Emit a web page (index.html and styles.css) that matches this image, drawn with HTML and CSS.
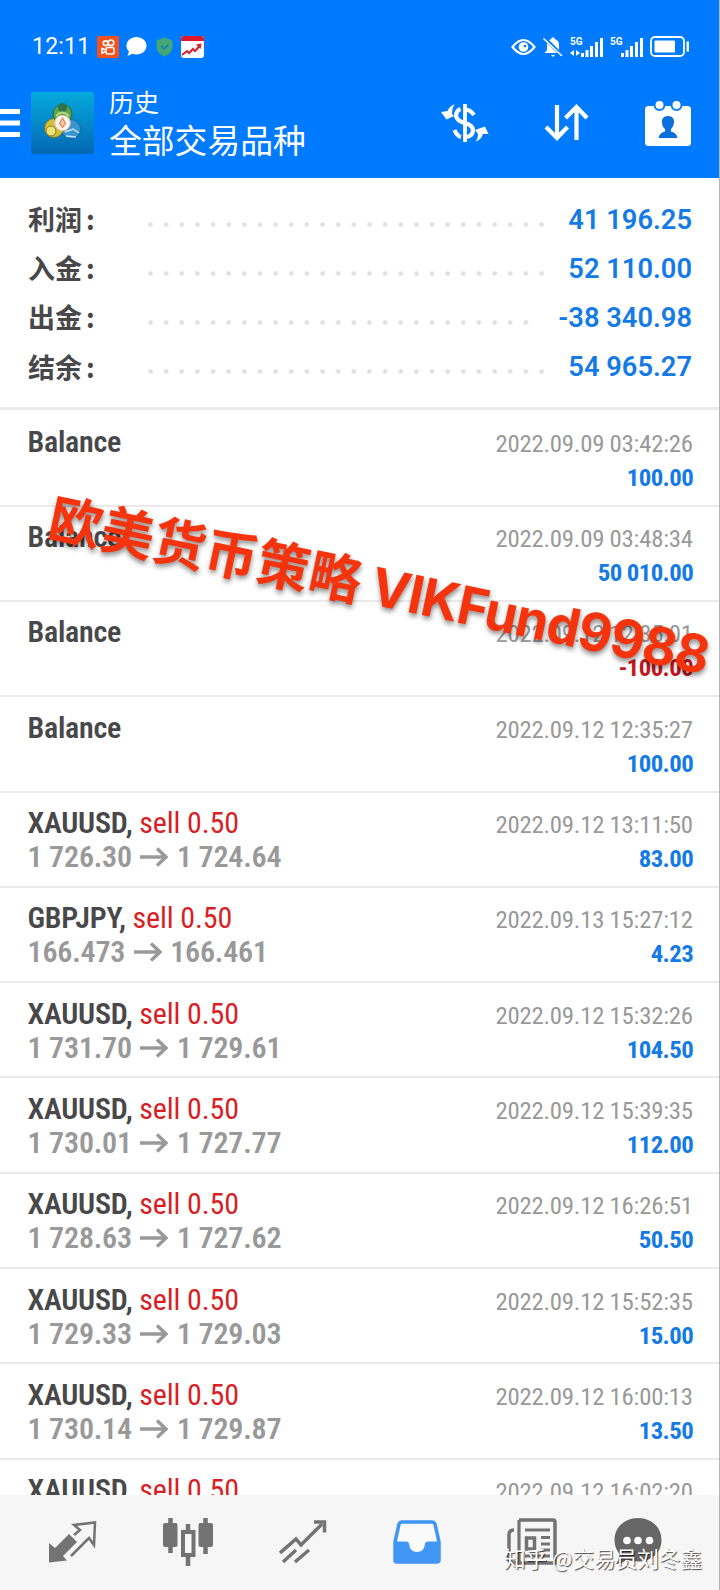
FILE: index.html
```html
<!DOCTYPE html>
<html lang="zh-CN">
<head>
    <meta charset="UTF-8">
    <meta name="viewport" content="width=device-width, initial-scale=1.0">
    <title>历史</title>
    <link rel="stylesheet" href="styles.css">
</head>
<body>

<div class="app">
    <header class="header">
        <div class="status-bar">
            <span class="clock">12:11</span>
            <svg class="st-video" width="22" height="22" viewBox="0 0 22 22">
                <rect width="22" height="22" rx="2" fill="#f4511e"/>
                <g fill="none" stroke="#fff" stroke-width="1.6">
                    <circle cx="8.6" cy="7.2" r="2.3"/>
                    <circle cx="14" cy="6.8" r="2.8"/>
                    <rect x="9" y="11.5" width="8" height="6.5" rx="1.6"/>
                    <path d="M9 14L5 12.5V17L9 15.5"/>
                </g>
            </svg>
            <svg class="st-chat" width="21" height="21" viewBox="0 0 21 21">
                <path d="M10.5 1C16 1 20.500 4.800 20.500 9.800S16 18.500 10.500 18.500C9 18.500 7.800 18.300 6.500 17.800L1.500 20L3 15.500C1.300 14 .5 12 .5 9.800C.5 4.800 5 1 10.500 1Z" fill="#fff"/>
            </svg>
            <svg class="st-shield" width="17" height="20" viewBox="0 0 17 20">
                <path d="M8.500 .5L16.500 3.500V9C16.500 14 13.500 17.500 8.500 19.500C3.500 17.500 .5 14 .5 9V3.500Z" fill="#43a876"/>
                <path d="M5 9L8 12L12.500 7.500" fill="none" stroke="#1478c8" stroke-width="1.500"/>
            </svg>
            <svg class="st-stock" width="23" height="22" viewBox="0 0 23 22">
                <rect width="23" height="22" rx="3" fill="#fff"/>
                <path d="M3 0H20Q23 0 23 3V5H0V3Q0 0 3 0Z" fill="#e0182d"/>
                <path d="M1 19L6 15L8 17L12 13L14 15L19 9.500" fill="none" stroke="#d8202c" stroke-width="2"/>
                <path d="M15 8.500L20.500 7.500L19.500 13Z" fill="#d8202c"/>
            </svg>
            <div class="status-right">
                <svg class="st-eye" width="25" height="18" viewBox="0 0 25 18">
                    <path d="M1.500 9Q12.500-5 23.500 9Q12.500 23 1.500 9Z" fill="none" stroke="#fff" stroke-width="2.200"/>
                    <circle cx="12.500" cy="9" r="4.800" fill="#fff"/>
                    <circle cx="14" cy="8" r="1.300" fill="#007aff"/>
                </svg>
                <svg class="st-bell" width="20" height="22" viewBox="0 0 20 22">
                    <path d="M1.500 17L4 14V9Q4 4 8.500 3V1.500H11.500V3Q16 4 16 9V14L18.500 17Z" fill="#fff"/>
                    <path d="M8 19H12L10 21Z" fill="#fff"/>
                    <path d="M1 1.500L19.500 20" stroke="#007aff" stroke-width="3.500"/>
                    <path d="M.5 2.500L19 20" stroke="#fff" stroke-width="1.500"/>
                </svg>
                <svg class="st-signal" width="33" height="22" viewBox="0 0 33 22">
                    <text x="0" y="9" class="net">5G</text>
                    <path d="M4 14L0 17L4 20ZM6 14L10 17L6 20Z" fill="#fff"/>
                    <path d="M12.500 17V21M17 14V21M21.500 10V21M26.500 6V21M31.500 2V21" stroke="#fff" stroke-width="3"/>
                </svg>
                <svg class="st-signal" width="33" height="22" viewBox="0 0 33 22">
                    <text x="0" y="9" class="net">5G</text>
                    <path d="M12.500 17V21M17 14V21M21.500 10V21M26.500 6V21M31.500 2V21" stroke="#fff" stroke-width="3"/>
                </svg>
                <svg class="st-battery" width="40" height="21" viewBox="0 0 40 21">
                    <rect x="1" y="1" width="33" height="19" rx="4" fill="none" stroke="#fff" stroke-width="1.800"/>
                    <rect x="4.500" y="4.500" width="20.500" height="12" rx="1" fill="#fff"/>
                    <rect x="36.500" y="5.500" width="2.500" height="10" fill="#fff"/>
                </svg>
            </div>
        </div>

        <div class="toolbar">
            <svg class="menu" width="20" height="30" viewBox="0 0 20 30">
                <path d="M0 3.500H20M0 15H20M0 26.500H20" stroke="#fff" stroke-width="5"/>
            </svg>
            <svg class="logo" width="63" height="62" viewBox="0 0 63 62">
                <defs>
                    <linearGradient id="logo-bg" x1="0" y1="0" x2="0" y2="1">
                        <stop offset="0" stop-color="#05a9dd"/>
                        <stop offset="1" stop-color="#0467b4"/>
                    </linearGradient>
                </defs>
                <rect width="63" height="62" rx="2" fill="url(#logo-bg)"/>
                <circle cx="40" cy="37" r="9.500" fill="#3a95d2" stroke="#1c66a0"/>
                <path d="M34 40L42 37L48 41M35 44L45 45" stroke="#c8e4f4" stroke-width="1.500" fill="none"/>
                <circle cx="23" cy="36" r="9.500" fill="#d3bf3c" stroke="#79732c"/>
                <circle cx="20" cy="39" r="5" fill="#eee27a" stroke="#8b7d24"/>
                <circle cx="31.500" cy="22" r="9.500" fill="#5ea34b" stroke="#286a42"/>
                <circle cx="31.500" cy="15.500" r="4.500" fill="#2e7350"/>
                <path d="M25 24Q31 17 38 24" stroke="#b7d981" stroke-width="2" fill="none"/>
                <circle cx="31.500" cy="31" r="7.800" fill="#fff6ec" stroke="#d9bea6"/>
                <path d="M31.500 26L34.500 31.500L31.500 35.500L28.500 31.500Z" fill="#f6c9a8" stroke="#e48b62" stroke-width="1.300"/>
            </svg>
            <div class="titles">
                <div class="subtitle">历史</div>
                <div class="title">全部交易品种</div>
            </div>
            <svg class="tb-currency" width="48" height="40" viewBox="0 0 48 40">
                <path d="M24 1V39" stroke="#fff" stroke-width="3.800"/>
                <path d="M33 12Q29 6.500 24 6.500M19.500 6Q15 8 15 13Q16 18 24 20Q32 22 32 28Q31 34 24 34M20 34Q16 33 13.500 27" fill="none" stroke="#fff" stroke-width="4.200"/>
                <path d="M13 1.500Q8.500 3 6.500 8L0 9L5.500 16.500L13 13L11 11Q11 5 13.500 1.500Z" fill="#fff"/>
                <path d="M34.500 38.500Q37 36 37 31L34 27L44 23.500L47.500 31L42 31Q40 37 34.500 38.500Z" fill="#fff"/>
            </svg>
            <svg class="tb-sort" width="45" height="38" viewBox="0 0 45 38">
                <path d="M13 1V34M2 23L13 34L23.500 23M32.500 36V3M21.500 14L32.500 3L43 14" fill="none" stroke="#fff" stroke-width="4.200"/>
            </svg>
            <svg class="tb-calendar" width="46" height="46" viewBox="0 0 46 46">
                <rect y="6" width="46" height="40" rx="3.500" fill="#fff"/>
                <g fill="#fff" stroke="#007aff" stroke-width="2">
                    <circle cx="14.500" cy="5" r="5"/>
                    <circle cx="31.500" cy="5" r="5"/>
                </g>
                <path d="M23 16C27.500 16 29.500 19 29 22.500C28.800 26 27 28 26 29V31.500Q32 33 32.500 38H13.500Q14 33 20 31.500V29C18.500 28 17.200 26 17 22.500C16.500 19 18.500 16 23 16Z" fill="#0b6fdc"/>
            </svg>
        </div>
    </header>

    <section class="summary">
        <div class="sum-row"><span class="sum-label">利润<span class="colon">:</span></span><span class="dots"></span><span class="sum-value">41 196.25</span></div>
        <div class="sum-row"><span class="sum-label">入金<span class="colon">:</span></span><span class="dots"></span><span class="sum-value">52 110.00</span></div>
        <div class="sum-row"><span class="sum-label">出金<span class="colon">:</span></span><span class="dots dots-short"></span><span class="sum-value">-38 340.98</span></div>
        <div class="sum-row"><span class="sum-label">结余<span class="colon">:</span></span><span class="dots"></span><span class="sum-value">54 965.27</span></div>
    </section>

    <main class="history" id="history"></main>

    <nav class="tabs">
        <svg width="48" height="42" viewBox="0 0 48 42">
            <path d="M0 41.500V22L6 27L20 13L28 21L14 35L18 39.500Z" fill="#737373"/>
            <path d="M25 14L31 9L25 4L46 1.500L45 24L40 17L22 35" fill="none" stroke="#737373" stroke-width="2.500"/>
        </svg>
        <svg width="50" height="48" viewBox="0 0 50 48">
            <path d="M7.500 0V35M42.500 0V36M25 6V14M25 38V48" stroke="#737373" stroke-width="4.500"/>
            <rect x="0" y="5" width="14.500" height="24" rx="2" fill="#737373"/>
            <rect x="35.500" y="5" width="14.500" height="24" rx="2" fill="#737373"/>
            <rect x="20" y="14" width="10.500" height="23" fill="#f6f6f6" stroke="#737373" stroke-width="4"/>
        </svg>
        <svg width="48" height="44" viewBox="0 0 48 44">
            <path d="M1 33L17 19L22 25L43 4M4 42L17 30M16 42L30 30" fill="none" stroke="#737373" stroke-width="3.500"/>
            <path d="M35 2H45.500V12.500" fill="none" stroke="#737373" stroke-width="3.500"/>
        </svg>
        <svg width="48" height="44" viewBox="0 0 48 44">
            <path d="M9 2H39Q41 2 42 4L46 22V40Q46 42 44 42H4Q2 42 2 40V22L6 4Q7 2 9 2Z" fill="#fafafa" stroke="#4095f5" stroke-width="3.500"/>
            <path d="M1 21.500H13Q16 21.500 16 24Q17 32 24 32Q31 32 32 24Q32 21.500 35 21.500H47V42H1Z" fill="#4095f5"/>
        </svg>
        <svg width="50" height="48" viewBox="0 0 50 48">
            <path d="M12 2H46Q48 2 48 4V45H6Q2 45 2 41V17Q2 12 7 12" fill="none" stroke="#737373" stroke-width="3.500"/>
            <path d="M12 2V43Q11 45 8 45M18 12H43M34 19.500H43M34 26H43M34 32H43M18 38H43" fill="none" stroke="#737373" stroke-width="3.200"/>
            <rect x="19.500" y="20" width="8" height="11" fill="none" stroke="#737373" stroke-width="3.500"/>
        </svg>
        <svg class="tab-chat" width="48" height="48" viewBox="0 0 48 48">
            <path d="M24 0C37.500 0 47.500 9.500 47.500 22S37.500 43.500 24 43.500Q17 43.500 12.500 41.500Q8 46 2 46Q5 42 5.500 36Q.5 30 .5 22C.5 9.500 10.500 0 24 0Z" fill="#666"/>
            <g fill="#fff"><circle cx="13" cy="22.500" r="3.800"/><circle cx="24" cy="22.500" r="3.800"/><circle cx="35.500" cy="22.500" r="3.800"/></g>
        </svg>
    </nav>

    <div class="banner">欧美货币策略<span class="banner-latin">VIKFund9988</span></div>
    <div class="credit">知乎 @交易员刘冬鑫</div>
</div>

<script>
    const deals = [
        { symbol: 'Balance', time: '2022.09.09 03:42:26', profit: '100.00' },
        { symbol: 'Balance', time: '2022.09.09 03:48:34', profit: '50 010.00' },
        { symbol: 'Balance', time: '2022.09.12 12:35:01', profit: '-100.00' },
        { symbol: 'Balance', time: '2022.09.12 12:35:27', profit: '100.00' },
        { symbol: 'XAUUSD', open: '1 726.30', close: '1 724.64', time: '2022.09.12 13:11:50', profit: '83.00' },
        { symbol: 'GBPJPY', open: '166.473', close: '166.461', time: '2022.09.13 15:27:12', profit: '4.23' },
        { symbol: 'XAUUSD', open: '1 731.70', close: '1 729.61', time: '2022.09.12 15:32:26', profit: '104.50' },
        { symbol: 'XAUUSD', open: '1 730.01', close: '1 727.77', time: '2022.09.12 15:39:35', profit: '112.00' },
        { symbol: 'XAUUSD', open: '1 728.63', close: '1 727.62', time: '2022.09.12 16:26:51', profit: '50.50' },
        { symbol: 'XAUUSD', open: '1 729.33', close: '1 729.03', time: '2022.09.12 15:52:35', profit: '15.00' },
        { symbol: 'XAUUSD', open: '1 730.14', close: '1 729.87', time: '2022.09.12 16:00:13', profit: '13.50' },
        { symbol: 'XAUUSD', open: '', close: '', time: '2022.09.12 16:02:20', profit: '' }
    ];

    const arrow = '<svg class="arrow" width="28" height="20" viewBox="0 0 28 20"><path d="M0 10H26M17 1.500L26 10L17 18.500" fill="none" stroke="#999" stroke-width="3.400"/></svg>';

    function renderDeal(deal) {
        const isTrade = deal.open !== undefined;
        const side = isTrade ? ', <span class="sell">sell 0.50</span>' : '';
        const prices = deal.open ? deal.open + arrow + deal.close : '&nbsp;';
        const sign = deal.profit.startsWith('-') ? 'loss' : 'gain';

        return `<div class="deal">
            <div class="line"><span class="symbol">${deal.symbol}${side}</span><span class="time">${deal.time}</span></div>
            <div class="line"><span class="prices">${prices}</span><span class="profit ${sign}">${deal.profit}</span></div>
        </div>`;
    }

    document.getElementById('history').innerHTML = deals.map(renderDeal).join('');
</script>

</body>
</html>
```
FILE: styles.css
```css
* {
    box-sizing: border-box;
}

body {
    margin: 0;
    background-color: #fff;
    font-family: Roboto, "Noto Sans CJK SC", sans-serif;
}

svg {
    display: block;
    flex-shrink: 0;
}

.app {
    position: relative;
    display: flex;
    flex-direction: column;
    width: 720px;
    height: 1590px;
    overflow: hidden;
    border-right: 1px solid #b5b5b8;
}

.header {
    flex-shrink: 0;
    height: 178px;
    margin-right: -1px;
    background-color: #007aff;
    color: #fff;
}

.status-bar {
    display: flex;
    align-items: center;
    height: 93px;
    padding: 0 30px 0 32px;
}

.clock {
    width: 65px;
    font-size: 23px;
    letter-spacing: 0.2px;
}

.st-chat {
    margin-left: 7px;
}

.st-shield {
    margin-left: 9px;
}

.st-stock {
    margin-left: 8px;
}

.status-right {
    display: flex;
    align-items: center;
    gap: 7px;
    margin-left: auto;
}

.net {
    fill: #fff;
    font: 700 10px Roboto, sans-serif;
}

.toolbar {
    display: flex;
    align-items: center;
    height: 62px;
    margin-top: -1px;
}

.logo {
    margin-left: 11px;
}

.titles {
    width: 332px;
    margin-left: 15px;
    padding-top: 5px;
}

.subtitle {
    font-size: 25px;
    line-height: 33px;
}

.title {
    font-size: 32.8px;
    line-height: 45px;
}

.tb-sort {
    margin-left: 55px;
}

.tb-calendar {
    margin-left: 56px;
}

.summary {
    flex-shrink: 0;
    height: 232px;
    padding: 16px 27px 0 28px;
    border-bottom: 3px solid #eaeaea;
}

.sum-row {
    display: flex;
    align-items: center;
    height: 49.2px;
}

.sum-label {
    width: 120px;
    color: #48484a;
    font: 700 27px "Noto Sans CJK SC", sans-serif;
}

.colon {
    padding-left: 4px;
}

.dots {
    width: 400px;
    height: 5px;
    margin-top: 11px;
    background: radial-gradient(circle at 2.500px 2.500px, #e0e0e0 1.800px, transparent 2.800px) 0 0 / 15.650px 5px;
}

.dots-short {
    width: 382px;
}

.sum-value {
    margin-left: auto;
    padding-top: 2px;
    color: #147ae6;
    font-size: 27.3px;
    font-weight: 600;
}

.history {
    flex: 1;
    min-height: 0;
    padding-top: 1.400px;
    overflow: hidden;
    font-family: "Roboto Condensed", Roboto, sans-serif;
    font-stretch: 75%;
}

.deal {
    height: 95.3px;
    padding: 13.5px 26.5px 0 27.5px;
    border-bottom: 2px solid #eaeaea;
}

.line {
    display: flex;
    justify-content: space-between;
    align-items: baseline;
    height: 34px;
    line-height: 34px;
    white-space: nowrap;
}

.symbol {
    color: #48484a;
    font-size: 30px;
    font-weight: 600;
    letter-spacing: -0.25px;
}

.sell {
    color: #d91f26;
    font-weight: 400;
    letter-spacing: -0.1px;
}

.prices {
    color: #999;
    font-size: 30px;
    font-weight: 600;
    letter-spacing: -0.2px;
}

.arrow {
    display: inline-block;
    margin: 0 8.5px;
}

.time {
    color: #999;
    font-size: 24.8px;
    letter-spacing: -0.24px;
    margin-right: -0.24px;
}

.profit {
    font-size: 24.8px;
    font-weight: 700;
    letter-spacing: -0.6px;
    margin-right: -0.6px;
}

.gain {
    color: #147ae6;
}

.loss {
    color: #c4161c;
}

.tabs {
    display: flex;
    flex-shrink: 0;
    gap: 66px;
    align-items: center;
    height: 95px;
    padding: 0 0 2px 49px;
    background-color: #f6f6f6;
}

.tab-chat {
    margin-left: -9px;
}

/* slanted advert across the list */
.banner {
    position: absolute;
    left: 57px;
    top: 484px;
    color: #f5330d;
    font: 700 53px/60px "Noto Sans CJK SC", sans-serif;
    white-space: nowrap;
    text-shadow: 1px 3px 5px rgba(0, 0, 0, 0.45);
    transform: rotate(11.9deg);
    transform-origin: 0 0;
}

.banner-latin {
    margin-left: 11px;
    font-family: Inter, sans-serif;
    font-size: 52.5px;
    font-weight: 700;
    letter-spacing: -1.1px;
}

.credit {
    position: absolute;
    left: 504px;
    top: 1542px;
    color: #fff;
    font: 400 21.6px/32px "Noto Sans CJK SC", sans-serif;
    white-space: nowrap;
    text-shadow: 1px 1px 1px rgba(0, 0, 0, 0.7);
}
```
